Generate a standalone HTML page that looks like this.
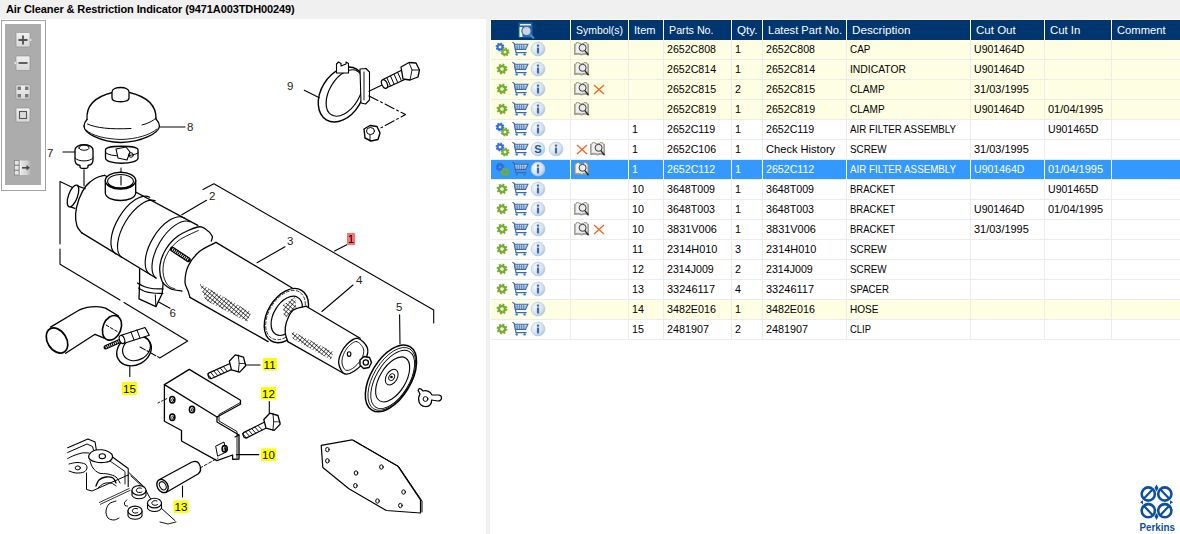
<!DOCTYPE html>
<html><head><meta charset="utf-8">
<style>
*{margin:0;padding:0;box-sizing:border-box}
html,body{width:1180px;height:534px;overflow:hidden;background:#f0f0f0;font-family:"Liberation Sans",sans-serif;position:relative}
.title{position:absolute;left:6px;top:2px;font-size:11px;font-weight:bold;color:#000;letter-spacing:-0.1px;white-space:nowrap;line-height:14px}
.lpanel{position:absolute;left:0;top:19px;width:486px;height:515px;background:#fff;overflow:hidden}
.rpanel{position:absolute;left:490px;top:19px;width:690px;height:515px;background:#fff;overflow:hidden}
.tb{position:absolute;left:1px;top:20px;width:45px;height:171px;border:1px solid #a3a3a3;background:#fff}
.tbin{position:absolute;left:5px;top:24px;width:36px;height:161px;background:#acacac}
.btn{position:absolute;width:16px;height:16px}
.hdr{position:absolute;left:491px;top:20px;width:689px;height:20px;background:#00366f}
.hsep{position:absolute;top:20px;width:1px;height:20px;background:#fff}
.ht{position:absolute;top:20px;height:20px;line-height:20px;font-size:11.5px;color:#fff;white-space:nowrap;transform-origin:0 50%}
.hicon{position:absolute}
.row{position:absolute;left:491px;width:689px;height:19px}
.vsep{position:absolute;width:1px;height:19px}
.hsepr{position:absolute;left:491px;width:689px;height:1px;background:#ececec}
.ic{position:absolute;overflow:visible}
.ct{position:absolute;height:19px;line-height:19px;font-size:11px;white-space:nowrap;transform-origin:0 50%}
.draw{position:absolute;left:0;top:0}
.lbl{font-family:"Liberation Sans",sans-serif;font-size:11px;fill:#000}
</style></head><body>
<svg width="0" height="0" style="position:absolute">
<defs>
<radialGradient id="ig" cx="0.35" cy="0.35" r="0.7"><stop offset="0" stop-color="#f4f7fb"/><stop offset="0.7" stop-color="#d6e2ef"/><stop offset="1" stop-color="#a9c3de"/></radialGradient><linearGradient id="bkg" x1="0" y1="0" x2="1" y2="0"><stop offset="0" stop-color="#9a9a88"/><stop offset="0.15" stop-color="#f4f4f4"/><stop offset="0.5" stop-color="#e8e8e8"/><stop offset="0.85" stop-color="#f0f0f0"/><stop offset="1" stop-color="#9a9a88"/></linearGradient>
</defs></svg>
<div class="title">Air Cleaner &amp; Restriction Indicator (9471A003TDH00249)</div>
<div class="lpanel"></div>
<div class="rpanel"></div>
<svg class="draw" width="486" height="534" viewBox="0 0 486 534" style="left:0;top:0;position:absolute">
<defs><pattern id="mesh" width="3.2" height="3.2" patternUnits="userSpaceOnUse" patternTransform="rotate(40)"><path d="M0 0 L0 3.2 M0 0 L3.2 0" stroke="#000" stroke-width="1.05"/></pattern></defs>
<g stroke="#000" stroke-linejoin="round" stroke-linecap="round">
<path d="M72.5 187.6 L60.0 181.5 L60.0 244.0" stroke-width="1.1" fill="none" />
<path d="M60.0 249.0 L60.0 264.3 L120.0 300.0" stroke-width="1.1" fill="none" />
<path d="M124.0 302.5 L187.7 341.0 L159.7 358.0" stroke-width="1.1" fill="none" />
<path d="M203.0 189.4 L213.9 183.8 L433.7 310.0 L433.7 323.0" stroke-width="1.1" fill="none" />
<g transform="translate(341.5 94.5) rotate(31)"><ellipse cx="0" cy="0" rx="20.5" ry="29.5" fill="#fff" stroke-width="1.4"/></g>
<g transform="translate(344.5 93) rotate(31)"><ellipse cx="0" cy="0" rx="15" ry="25.5" fill="#fff" stroke-width="1.2"/></g>
<path d="M336.5 64.0 L338.5 62.0 L341.0 63.5 L341.0 66.0 L346.0 64.0 L346.0 62.0 L348.5 63.5 L348.5 73.0 L336.5 73.0 Z" stroke-width="1.1" fill="#fff" />
<path d="M360.0 69.0 L366.0 68.5 L369.5 72.0 L369.5 100.0 L365.5 104.0 L361.0 103.0 Z" stroke-width="1.1" fill="#fff" />
<path d="M364.0 72.0 L364.0 100.0" stroke-width="0.9" fill="none" />
<path d="M304.3 90.3 L319.3 97.8" stroke-width="1.1" fill="none" />
<path d="M369.0 91.2 L383.0 84.5" stroke-width="1.1" fill="none" />
<path d="M383.0 79.5 L402.0 70.0 L406.0 79.0 L386.0 88.0 Z" stroke-width="1.2" fill="#fff" />
<path d="M387.0 78.0 L390.5 86.0" stroke-width="1.0" fill="none" />
<path d="M390.6 76.2 L394.1 84.2" stroke-width="1.0" fill="none" />
<path d="M394.2 74.4 L397.7 82.4" stroke-width="1.0" fill="none" />
<path d="M397.8 72.6 L401.3 80.6" stroke-width="1.0" fill="none" />
<path d="M401.4 70.8 L404.9 78.8" stroke-width="1.0" fill="none" />
<ellipse cx="384.5" cy="84" rx="2.6" ry="4.6" transform="rotate(-26 384.5 84)" fill="#fff" stroke-width="1.2"/>
<path d="M401.0 67.0 L409.0 62.5 L416.0 63.0 L419.5 70.0 L418.0 77.0 L410.0 80.0 L403.0 79.0 Z" stroke-width="1.3" fill="#fff" />
<path d="M409.0 62.5 L412.0 70.0 L419.5 70.0" stroke-width="0.9" fill="none" />
<path d="M412.0 70.0 L410.0 80.0" stroke-width="0.9" fill="none" />
<path d="M369.0 95.9 L405.5 114.6 L379.3 128.7" stroke-width="1.1" fill="none" stroke-dasharray="10 3 2 3"/>
<path d="M364.0 129.0 L370.0 125.5 L377.0 126.5 L380.0 133.0 L378.0 139.5 L371.0 141.0 L365.0 138.0 Z" stroke-width="1.4" fill="#fff" />
<ellipse cx="370.5" cy="131" rx="4" ry="3.5" stroke-width="1" fill="none"/>
<path d="M370.0 135.0 L370.0 141.0" stroke-width="0.9" fill="none" />
<path d="M84 126 C84 133 100 142 121 142.5 C142 142 159 133 159.5 126 C159 122 157 120 156 119" stroke-width="1.3" fill="#fff" />
<path d="M86 130 C92 136 106 139 121 139.5 C137 139 150 135 157 129" stroke-width="0.9" fill="none" />
<path d="M84 126 C84 123 85.5 121 87 119.5" stroke-width="1.3" fill="none" />
<path d="M87 119.5 C86 106 94 97 112.5 92.5 M129.5 92.5 C148 97 156.5 106 156 119" stroke-width="1.3" fill="none" />
<path d="M87.5 124 C96 128 110 129.5 131 128.5 M142 125 C148 123.5 153 121 156 118" stroke-width="1" fill="none" />
<path d="M112 92 C112 86 129 86 129 92 L129 98 C129 103 112 103 112 98 Z" stroke-width="1.3" fill="#fff" />
<path d="M105.5 150 C105.5 145 138 145 138 150 L138 158 C138 165 105.5 165 105.5 158 Z" stroke-width="1.3" fill="#fff" />
<path d="M106 153 C110 157 132 157 138 153" stroke-width="1" fill="none" />
<path d="M116.0 149.0 L126.0 147.0 L130.0 152.0 L127.0 160.0 L118.0 158.0 Z" stroke-width="1.1" fill="#fff" />
<circle cx="131" cy="155" r="2.3" stroke-width="1" fill="none"/>
<path d="M121.0 168.0 L121.0 190.0" stroke-width="1" fill="none" stroke-dasharray="4 2 1 2"/>
<path d="M75 150 C75 143 93 143 93 150 L93 160 C93 163 91 165 88 165.5 L88 167 C88 169 80 169 80 167 L80 165.5 C77 165 75 163 75 160 Z" stroke-width="1.3" fill="#fff" />
<path d="M79 148 C79 144 89 144 89 148 C89 151 79 151 79 148 Z" stroke-width="1" fill="none" />
<path d="M75 158 C78 162 90 162 93 158" stroke-width="1" fill="none" />
<path d="M84.0 170.0 L84.0 186.0" stroke-width="1.1" fill="none" />
<path d="M63.0 152.0 L75.0 152.0" stroke-width="1.1" fill="none" />
<path d="M160.0 127.0 L185.0 127.0" stroke-width="1.1" fill="none" />
<path d="M139.6 266.0 L139.6 283.0 L139.0 298.8 L155.9 306.6 L162.1 293.7 L163.0 285.0 L163.0 276.0 Z" stroke-width="1.3" fill="#fff" />
<path d="M137.4 283.0 C138.5 283.6 141.6 285.6 144.0 286.5 C146.4 287.4 148.8 288.1 152.0 288.5 C155.2 288.9 161.3 288.9 163.2 289.0" stroke-width="1.2" fill="none" />
<path d="M138.5 288.0 C139.6 288.6 142.6 290.7 145.0 291.5 C147.4 292.3 150.0 292.7 153.0 293.0 C156.0 293.3 161.3 293.4 163.0 293.5" stroke-width="1.1" fill="none" />
<path d="M155.3 294.8 L155.9 306.6" stroke-width="1.0" fill="none" />
<path d="M158.7 302.1 L170.0 308.3" stroke-width="1.1" fill="none" />
<path d="M104.4 175.3 C102.8 175.8 98.1 176.7 95.0 178.5 C91.9 180.3 88.7 182.6 86.0 186.0 C83.3 189.4 80.7 194.3 79.0 199.0 C77.3 203.7 75.9 209.5 75.6 214.0 C75.3 218.5 76.0 222.8 77.0 226.0 C78.0 229.2 81.0 231.8 81.8 232.9 L155 278 L162 281 L170 288.5 L181.8 291 L213 262 L212.1 238.9 L205.7 229.3 L197.8 225.4 Z" stroke-width="1.3" fill="#fff" stroke="none"/>
<path d="M104.4 175.3 C102.8 175.8 98.1 176.7 95.0 178.5 C91.9 180.3 88.7 182.6 86.0 186.0 C83.3 189.4 80.7 194.3 79.0 199.0 C77.3 203.7 75.9 209.5 75.6 214.0 C75.3 218.5 76.0 222.8 77.0 226.0 C78.0 229.2 81.0 231.8 81.8 232.9" stroke-width="1.3" fill="none" />
<path d="M104.4 175.3 L197.8 225.4" stroke-width="1.3" fill="none" />
<path d="M81.8 232.9 L156.0 278.0" stroke-width="1.3" fill="none" />
<g transform="rotate(31)" fill="none" stroke-width="1.15"><path d="M230 92 A16 33 0 0 0 230 158"/><path d="M236.5 92.2 A16 33 0 0 0 236.5 158"/><path d="M270.3 92 A16.5 33 0 0 0 270.3 158"/><path d="M277 92.2 A16.5 33 0 0 0 277 158"/></g>
<path d="M211.3 241.0 C211.4 240.2 213.0 237.9 212.1 236.0 C211.2 234.1 208.1 230.8 205.7 229.3 C203.3 227.8 202.4 225.9 197.8 227.0 C193.2 228.1 183.3 232.3 178.0 236.0 C172.7 239.7 169.0 244.2 166.0 249.0 C163.0 253.8 160.7 259.7 160.0 265.0 C159.3 270.3 160.3 277.1 162.0 281.0 C163.7 284.9 166.7 286.8 170.0 288.5 C173.3 290.2 179.8 290.6 181.8 291.0" stroke-width="1.3" fill="none" />
<path d="M198.3 230.5 C194.9 232.2 183.4 236.8 178.0 241.0 C172.6 245.2 168.5 250.8 166.0 256.0 C163.5 261.2 162.8 267.2 163.0 272.0 C163.2 276.8 165.4 281.9 167.4 284.7 C169.4 287.5 173.7 288.3 175.0 289.0" stroke-width="0.9" fill="none" />
<path d="M105.3 180.6 L105.3 193 C106 203 135 203 135.7 193 L135.7 180.6" stroke-width="1.3" fill="#fff" />
<ellipse cx="120.5" cy="180.6" rx="15.2" ry="8.4" fill="#fff" stroke-width="1.4"/>
<ellipse cx="120.5" cy="181.3" rx="12.9" ry="6.8" fill="none" stroke-width="1.1"/>
<path d="M108 185 C112 189.5 129 189.5 133 185" stroke-width="1.6" fill="none" />
<path d="M121.0 176.0 L121.0 185.0" stroke-width="1.1" fill="none" />
<g transform="translate(73 196) rotate(20)"><path d="M0 -11 L9 -11 M0 11 L6 11" stroke-width="1.2"/><ellipse cx="0" cy="0" rx="4.5" ry="11.5" fill="#fff" stroke-width="1.3"/></g>
<path d="M172.3 249.2 L188.2 259.6" stroke-width="5" fill="none" />
<path d="M172.3 249.2 L188.2 259.6" stroke-width="2.6" fill="none" stroke="#fff" stroke-dasharray="0.9 1.1" stroke-linecap="butt"/>
<path d="M216.0 242.4 C213.2 243.9 204.0 247.7 199.4 251.6 C194.8 255.5 190.6 260.9 188.2 266.0 C185.8 271.1 185.0 277.7 185.0 281.9 C185.0 286.1 187.4 288.8 188.2 291.4 C189.0 294.0 189.7 296.4 190.0 297.4 L268.1 341.6 C269.2 341.8 271.9 343.0 274.7 343.0 C277.5 343.0 281.6 343.3 285.2 341.6 C288.8 339.9 292.7 337.3 296.0 333.0 C299.3 328.7 303.0 321.3 305.0 316.0 C307.0 310.7 308.9 305.2 308.1 301.0 C307.3 296.8 302.5 293.1 300.0 291.0 C297.5 288.9 294.2 288.9 293.0 288.5 L216 242.4 Z" stroke-width="1.3" fill="#fff" stroke="none"/>
<path d="M216.0 242.4 C213.2 243.9 204.0 247.7 199.4 251.6 C194.8 255.5 190.6 260.9 188.2 266.0 C185.8 271.1 185.0 277.7 185.0 281.9 C185.0 286.1 187.4 288.8 188.2 291.4 C189.0 294.0 189.7 296.4 190.0 297.4" stroke-width="1.3" fill="none" />
<path d="M216.0 242.4 L294.3 289.2" stroke-width="1.3" fill="none" />
<path d="M190.0 297.4 L268.1 341.6" stroke-width="1.3" fill="none" />
<g transform="rotate(31)"><ellipse cx="408" cy="123" rx="18.8" ry="29.5" fill="#fff" stroke-width="1.4"/><ellipse cx="407" cy="123" rx="16.5" ry="27" fill="none" stroke-width="0.7" stroke-dasharray="3 2"/><ellipse cx="408.5" cy="123" rx="13" ry="21.5" fill="none" stroke-width="1.2"/></g>
<path d="M199.7 283.4 L251.2 312.5 L247.4 321.8 L205.3 300.3 Z" fill="url(#mesh)" stroke="none"/>
<path d="M283 305 L295 297 L297 311 L284 318 Z" fill="url(#mesh)" stroke="none"/>
<path d="M306.1 306.2 C303.9 306.9 296.3 307.6 293.0 310.2 C289.7 312.8 287.8 318.3 286.5 322.0 C285.2 325.7 285.0 329.2 285.2 332.5 C285.4 335.8 287.4 340.1 287.8 341.6 L343 373 C343.2 373.1 342.4 373.9 344.2 373.6 C346.0 373.3 350.6 373.4 354.0 371.2 C357.4 369.0 362.7 364.1 364.9 360.2 C367.1 356.3 368.2 351.6 367.4 348.0 C366.6 344.4 361.3 339.9 360.1 338.3 Z" stroke-width="1.3" fill="#fff" stroke="none"/>
<path d="M306.1 306.2 C303.9 306.9 296.3 307.6 293.0 310.2 C289.7 312.8 287.8 318.3 286.5 322.0 C285.2 325.7 285.0 329.2 285.2 332.5 C285.4 335.8 287.4 340.1 287.8 341.6" stroke-width="1.3" fill="none" />
<path d="M306.1 306.2 L360.1 338.3" stroke-width="1.3" fill="none" />
<path d="M287.8 341.6 L343.0 373.0" stroke-width="1.3" fill="none" />
<path d="M357.6 338.3 C361.1 338.9 366.2 344.4 367.4 348.0 C368.6 351.6 367.1 356.3 364.9 360.2 C362.7 364.1 357.4 369.0 354.0 371.2 C350.6 373.4 346.7 374.8 344.2 373.6 C341.7 372.4 339.4 367.1 338.8 363.8 C338.2 360.6 339.3 357.3 340.6 354.1 C341.9 350.9 343.9 347.0 346.7 344.4 C349.5 341.8 354.2 337.7 357.6 338.3 Z" stroke-width="1.3" fill="#fff" />
<path d="M356.5 341.5 C359.0 341.9 362.7 346.1 363.5 349.0 C364.3 351.9 363.3 355.8 361.5 359.0 C359.7 362.2 355.2 366.7 352.5 368.5 C349.8 370.3 347.2 370.9 345.5 370.0 C343.8 369.1 342.3 365.6 342.0 363.0 C341.7 360.4 342.4 357.2 343.5 354.5 C344.6 351.8 346.3 348.7 348.5 346.5 C350.7 344.3 354.0 341.1 356.5 341.5 Z" stroke-width="0.9" fill="none" />
<ellipse cx="349.1" cy="354.1" rx="1.8" ry="2.3" stroke-width="1.1" fill="none"/>
<path d="M291.5 330.9 L333.5 351.9 L330.9 359.7 L292.8 338.7 Z" fill="url(#mesh)" stroke="none"/>
<path d="M360.0 360.0 L364.0 356.5 L369.5 357.5 L371.5 362.5 L369.0 367.5 L363.5 368.5 L360.0 365.0 Z" stroke-width="1.4" fill="#fff" />
<circle cx="365.8" cy="362.5" r="2.6" fill="none" stroke-width="1.3"/>
<g transform="rotate(31)"><ellipse cx="530" cy="123" rx="20" ry="37" fill="#fff" stroke-width="1.5"/><ellipse cx="531" cy="123" rx="18.3" ry="35" stroke-width="0.8" fill="none"/><ellipse cx="532" cy="123" rx="16.5" ry="32.5" stroke-width="0.9" fill="none"/><ellipse cx="532" cy="123" rx="13" ry="25" stroke-width="1.1" fill="none"/><ellipse cx="530" cy="121.5" rx="5.5" ry="8.5" stroke-width="1" fill="none"/><ellipse cx="530" cy="121.5" rx="2.6" ry="3.6" stroke-width="0.9" fill="none"/></g>
<circle cx="391.5" cy="377" r="1.3" fill="#000" stroke="none"/>
<path d="M420 394 C417 399 419 406 425 406.5 C430 407 432 403 431.5 400 L438 401 C442 401 443 396 439 395 L432 395 C430 391 426 390 423 391 L421 389 C419 388 417 390 419 392 Z" stroke-width="1.2" fill="#fff" />
<circle cx="425.5" cy="399" r="2.4" fill="none" stroke-width="1"/>
<path d="M181.8 214.7 L206.5 200.3" stroke-width="1.1" fill="none" />
<path d="M257.0 262.7 L285.0 246.7" stroke-width="1.1" fill="none" />
<path d="M334.6 251.0 L349.7 243.3" stroke-width="1.1" fill="none" />
<path d="M321.9 311.5 L353.0 285.0" stroke-width="1.1" fill="none" />
<path d="M399.6 314.7 L400.0 344.0" stroke-width="1.1" fill="none" />
<path d="M50.5 327.1 L78 310.7 C84 307 98 305 105.5 308.1 L118.6 316 L104.2 338.2 L95 334.3 L65.6 353.3 Z" stroke-width="1.3" fill="#fff" stroke="none"/>
<path d="M50.5 327.1 L78 310.7 C84 307 98 305 105.5 308.1 L118.6 316" stroke-width="1.3" fill="none" />
<path d="M65.6 353.3 L95.0 334.3 L104.2 338.2" stroke-width="1.3" fill="none" />
<g transform="translate(57 340.5) rotate(-32)"><ellipse cx="0" cy="0" rx="9.5" ry="13.5" fill="#fff" stroke-width="1.7"/></g>
<g transform="translate(112 327.8) rotate(22)"><ellipse cx="0" cy="0" rx="9" ry="12.8" fill="#fff" stroke-width="1.6"/></g>
<g transform="translate(134 350.5) rotate(-28)"><ellipse cx="0" cy="0" rx="18" ry="14.5" fill="none" stroke-width="1.4"/></g>
<g transform="translate(136.5 348.5) rotate(-28)"><ellipse cx="0" cy="0" rx="14.5" ry="11.5" fill="none" stroke-width="1.2"/></g>
<path d="M106.2 325.1 L117.0 331.5" stroke-width="1.0" fill="none" stroke-dasharray="3 2"/>
<path d="M140.0 347.0 L160.0 358.0" stroke-width="1.1" fill="none" stroke-dasharray="6 2 2 2"/>
<path d="M105.7 347.3 L122.1 340.0" stroke-width="4.4" fill="none" />
<path d="M105.7 347.3 L122.1 340.0" stroke-width="2.2" fill="none" stroke="#fff" stroke-dasharray="0.9 1.1" stroke-linecap="butt"/>
<path d="M120.6 335.5 L145.0 327.5 L149.3 335.3 L123.5 343.5 Z" stroke-width="1.2" fill="#fff" />
<ellipse cx="122" cy="339.5" rx="2.5" ry="4.2" transform="rotate(-20 122 339.5)" fill="#fff" stroke-width="1.1"/>
<path d="M131.0 332.0 L134.0 340.0" stroke-width="1.0" fill="none" />
<path d="M137.0 330.0 L140.0 338.0" stroke-width="1.0" fill="none" />
<path d="M129.8 366.8 L129.8 376.5" stroke-width="1.1" fill="none" />
<path d="M164.4 384.6 L189.3 369.4 L240.5 400.3 L240.5 404.2 L217.0 417.0 L217.0 422.0 L239.0 435.0 L239.0 459.0 L232.6 459.3 L232.6 455.0 L216.9 460.6 L181.5 441.0 L181.5 430.5 L164.4 421.3 Z" stroke-width="1.3" fill="#fff" />
<path d="M164.4 384.6 L217.0 417.0" stroke-width="1.3" fill="none" />
<path d="M235.0 437.0 L239.0 435.0" stroke-width="1.1" fill="none" />
<path d="M240.5 402.5 L219.0 414.5 L219.0 421.0 L237.0 431.5 L237.0 458.0" stroke-width="0.9" fill="none" />
<ellipse cx="172.3" cy="399.8" rx="2.6" ry="3.3" stroke-width="1.5" fill="none"/><ellipse cx="172.70000000000002" cy="400.1" rx="1" ry="1.5" stroke-width="0.8" fill="none"/>
<ellipse cx="172.3" cy="417.3" rx="2.6" ry="3.3" stroke-width="1.5" fill="none"/><ellipse cx="172.70000000000002" cy="417.6" rx="1" ry="1.5" stroke-width="0.8" fill="none"/>
<ellipse cx="192" cy="409.5" rx="2.6" ry="3.3" stroke-width="1.5" fill="none"/><ellipse cx="192.4" cy="409.8" rx="1" ry="1.5" stroke-width="0.8" fill="none"/>
<ellipse cx="224.7" cy="448.8" rx="2.6" ry="3.3" stroke-width="1.5" fill="none"/><ellipse cx="225.1" cy="449.1" rx="1" ry="1.5" stroke-width="0.8" fill="none"/>
<path d="M158.0 403.0 L168.0 398.0" stroke-width="0.9" fill="none" stroke-dasharray="2 2"/>
<path d="M216.0 446.0 L224.0 442.0 L226.0 452.0 L218.0 456.0 Z" stroke-width="1.0" fill="none" />
<path d="M231.6 362.8 L208.6 373.1 L207.9 375.1 L209.1 377.9 L211.1 378.7 L234.1 368.4 Z" stroke-width="1.2" fill="#fff" />
<path d="M223.4 366.6 L227.3 371.3" stroke-width="0.9" fill="none" />
<path d="M220.2 368.0 L224.1 372.8" stroke-width="0.9" fill="none" />
<path d="M217.0 369.5 L220.9 374.2" stroke-width="0.9" fill="none" />
<path d="M213.8 370.9 L217.7 375.6" stroke-width="0.9" fill="none" />
<path d="M210.6 372.3 L214.5 377.0" stroke-width="0.9" fill="none" />
<path d="M207.4 373.7 L211.3 378.5" stroke-width="0.9" fill="none" />
<path d="M245.7 365.8 L239.7 372.1 L231.5 369.8 L229.3 361.2 L235.3 354.9 L243.5 357.2 Z" stroke-width="1.3" fill="#fff" />
<path d="M238.3 355.0 L239.2 363.5 L238.3 372.0" stroke-width="0.9" fill="none" />
<path d="M239.2 363.5 L245.6 363.5" stroke-width="0.8" fill="none" />
<path d="M245.5 365.0 L260.0 365.0" stroke-width="1.1" fill="none" />
<path d="M266.1 421.3 L243.5 432.6 L242.8 434.6 L244.2 437.4 L246.2 438.1 L268.8 426.8 Z" stroke-width="1.2" fill="#fff" />
<path d="M258.0 425.5 L262.1 430.0" stroke-width="0.9" fill="none" />
<path d="M254.9 427.0 L258.9 431.6" stroke-width="0.9" fill="none" />
<path d="M251.7 428.6 L255.8 433.2" stroke-width="0.9" fill="none" />
<path d="M248.6 430.2 L252.7 434.7" stroke-width="0.9" fill="none" />
<path d="M245.5 431.7 L249.5 436.3" stroke-width="0.9" fill="none" />
<path d="M242.3 433.3 L246.4 437.9" stroke-width="0.9" fill="none" />
<path d="M280.2 424.1 L274.2 430.4 L266.0 428.1 L263.8 419.5 L269.8 413.2 L278.0 415.5 Z" stroke-width="1.3" fill="#fff" />
<path d="M272.9 413.3 L273.7 421.8 L272.9 430.3" stroke-width="0.9" fill="none" />
<path d="M273.7 421.8 L280.1 421.8" stroke-width="0.8" fill="none" />
<path d="M269.3 401.6 L269.3 413.0" stroke-width="1.1" fill="none" />
<path d="M236.5 454.6 L258.8 454.6" stroke-width="1.1" fill="none" />
<path d="M159.5 479.5 L192 462 C200 459 203 470 198 474 L166 492.5" stroke-width="1.3" fill="#fff" />
<g transform="translate(162.5 486) rotate(-30)"><ellipse cx="0" cy="0" rx="5.2" ry="7" fill="#fff" stroke-width="1.4"/><ellipse cx="0.3" cy="0" rx="3" ry="4.4" stroke-width="1" fill="none"/></g>
<path d="M182.5 486.0 L182.5 497.0" stroke-width="1.1" fill="none" />
<path d="M200.0 468.0 L218.0 458.0" stroke-width="0.9" fill="none" stroke-dasharray="3 2"/>
<path d="M67.7 447.7 L87.9 439.1 L95.1 442.0 L96.5 451.0" stroke-width="1.1" fill="none" />
<path d="M67.7 452.5 L87.0 444.0 L92.5 446.5 L93.5 450.0" stroke-width="1.0" fill="none" />
<path d="M67.7 458.5 C68.8 458.0 71.6 456.4 74.0 455.5 C76.4 454.6 79.5 453.4 82.0 453.0 C84.5 452.6 87.8 453.0 89.0 453.0" stroke-width="1.0" fill="none" />
<path d="M89.0 455.0 C89.7 453.5 91.8 451.4 94.0 450.5 C96.2 449.6 99.5 449.6 102.0 449.8 C104.5 450.1 107.2 451.0 109.0 452.0 C110.8 453.0 112.3 454.5 112.5 456.0 C112.7 457.5 111.6 459.9 110.0 461.0 C108.4 462.1 105.3 462.3 103.0 462.5 C100.7 462.7 98.2 462.5 96.0 462.0 C93.8 461.5 91.2 460.7 90.0 459.5 C88.8 458.3 88.3 456.5 89.0 455.0 Z" stroke-width="1.1" fill="#fff" />
<ellipse cx="102.3" cy="456.2" rx="3.2" ry="2.4" stroke-width="1.1" fill="none"/>
<path d="M112.5 457.0 L128.2 468.5 L128.2 486.5" stroke-width="1.1" fill="none" />
<path d="M110.0 461.0 L125.0 471.5 L125.0 484.0" stroke-width="0.9" fill="none" />
<path d="M90.0 461.0 C90.5 462.2 91.5 466.0 93.0 468.0 C94.5 470.0 96.5 472.0 99.0 473.0 C101.5 474.0 105.2 473.3 108.0 474.0 C110.8 474.7 114.0 475.5 116.0 477.0 C118.0 478.5 119.3 482.0 120.0 483.0" stroke-width="1.0" fill="none" />
<path d="M96.0 486.0 C96.5 485.0 97.3 481.5 99.0 480.0 C100.7 478.5 103.7 477.3 106.0 477.0 C108.3 476.7 111.3 477.0 113.0 478.0 C114.7 479.0 115.5 482.2 116.0 483.0" stroke-width="1.4" fill="none" />
<path d="M98.0 488.0 C99.0 487.2 101.8 484.3 104.0 483.5 C106.2 482.7 109.0 482.6 111.0 483.0 C113.0 483.4 115.2 485.5 116.0 486.0" stroke-width="1.0" fill="none" />
<path d="M69.0 464.0 C70.3 463.8 74.3 462.5 77.0 462.5 C79.7 462.5 83.3 463.1 85.0 464.0 C86.7 464.9 87.2 466.7 87.0 468.0 C86.8 469.3 85.8 471.2 84.0 472.0 C82.2 472.8 78.5 473.2 76.0 473.0 C73.5 472.8 70.2 471.3 69.0 471.0" stroke-width="1.0" fill="none" />
<ellipse cx="77.8" cy="467.9" rx="2.6" ry="2" stroke-width="1" fill="none"/>
<path d="M86.5 473.0 L86.5 489.5 L92.0 491.0 L128.2 475.0" stroke-width="1.0" fill="none" />
<path d="M99.4 502.5 L129.2 488.5" stroke-width="0.8" fill="none" />
<path d="M100.4 504.3 L130.2 490.3" stroke-width="0.8" fill="none" />
<path d="M129.2 472.9 L143.8 486.5 L150.0 498.0 L175.0 520.6" stroke-width="1.0" fill="none" />
<path d="M131.0 476.0 L146.0 490.0" stroke-width="0.9" fill="none" />
<path d="M132 490.4 L132 495.4 C134 499.9 144 499.9 146 495.4 L146 490.4" stroke-width="1.1" fill="#fff"/>
<ellipse cx="139" cy="490.4" rx="7" ry="4.8" fill="#fff" stroke-width="1.1"/><path d="M141.5 488.2 C138 486.9 135 489.4 137 491.9 C139 493.2 141.5 492.4 142 491.9" fill="none" stroke-width="1"/>
<path d="M147.5 503.1 L147.5 508.1 C149.5 512.6 159.5 512.6 161.5 508.1 L161.5 503.1" stroke-width="1.1" fill="#fff"/>
<ellipse cx="154.5" cy="503.1" rx="7" ry="4.8" fill="#fff" stroke-width="1.1"/><path d="M157.0 500.90000000000003 C153.5 499.6 150.5 502.1 152.5 504.6 C154.5 505.90000000000003 157.0 505.1 157.5 504.6" fill="none" stroke-width="1"/>
<path d="M128 510.9 L128 515.9 C130 520.4 140 520.4 142 515.9 L142 510.9" stroke-width="1.1" fill="#fff"/>
<ellipse cx="135" cy="510.9" rx="7" ry="4.8" fill="#fff" stroke-width="1.1"/><path d="M137.5 508.7 C134 507.4 131 509.9 133 512.4 C135 513.6999999999999 137.5 512.9 138 512.4" fill="none" stroke-width="1"/>
<path d="M116.0 501.0 C114.8 501.5 110.7 502.3 109.0 504.0 C107.3 505.7 106.2 508.7 106.0 511.0 C105.8 513.3 106.7 516.5 108.0 518.0 C109.3 519.5 112.2 520.0 114.0 520.0 C115.8 520.0 118.2 518.3 119.0 518.0" stroke-width="1.0" fill="none" />
<path d="M127.0 500.0 C126.6 500.4 124.8 501.6 124.5 502.5 C124.2 503.4 124.5 504.9 125.0 505.5 C125.5 506.1 127.1 505.9 127.5 506.0" stroke-width="1.0" fill="none" />
<path d="M160.0 522.0 L168.0 524.0 L176.0 522.0" stroke-width="0.9" fill="none" />
<path d="M321.2 445.3 L352.0 439.8 L397.7 465.9 L420.5 500.0 L420.5 513.0 L386.3 510.5 L348.9 488.7 L322.8 467.5 Z" stroke-width="1.2" fill="#fff" />
<path d="M354.0 440.5 L399.0 467.0 L422.0 501.0 L422.0 512.0" stroke-width="1" fill="none" />
<ellipse cx="327.4" cy="449.6" rx="1.8" ry="2.2" stroke-width="1" fill="none"/>
<ellipse cx="327.4" cy="460.8" rx="1.8" ry="2.2" stroke-width="1" fill="none"/>
<ellipse cx="356" cy="473" rx="1.8" ry="2.2" stroke-width="1" fill="none"/>
<ellipse cx="381.4" cy="467" rx="1.8" ry="2.2" stroke-width="1" fill="none"/>
<ellipse cx="355.4" cy="485.7" rx="1.8" ry="2.2" stroke-width="1" fill="none"/>
<ellipse cx="403.6" cy="492" rx="1.8" ry="2.2" stroke-width="1" fill="none"/>
<ellipse cx="377.5" cy="501" rx="1.8" ry="2.2" stroke-width="1" fill="none"/>
<ellipse cx="400.4" cy="505.5" rx="1.8" ry="2.2" stroke-width="1" fill="none"/>
</g>
<g font-family="Liberation Sans" font-size="11.5" fill="#222">
<text x="47" y="157">7</text><text x="187" y="131">8</text><text x="287" y="90">9</text>
<text x="209" y="200">2</text><text x="287" y="245">3</text><text x="356" y="284">4</text>
<text x="396" y="311">5</text><text x="169.5" y="316.5">6</text>
</g>
<g font-family="Liberation Sans" font-size="11.5" fill="#000">
<rect x="347" y="233" width="8" height="12" fill="#ff7070"/><text x="347.8" y="243.3">1</text>
<rect x="122" y="382" width="15" height="13" fill="#ffff00"/><text x="123" y="392.8">15</text>
<rect x="263" y="358" width="14" height="12.5" fill="#ffff00"/><text x="263.6" y="369">11</text>
<rect x="261" y="387" width="15" height="12.5" fill="#ffff00"/><text x="262" y="398">12</text>
<rect x="261" y="448.5" width="15" height="12.5" fill="#ffff00"/><text x="262" y="459">10</text>
<rect x="173.5" y="500.5" width="15" height="12.5" fill="#ffff00"/><text x="174.5" y="511">13</text>
</g>
</svg>
<div class="tb"></div><div class="tbin"></div>
<svg style="position:absolute;left:0;top:0" width="46" height="192" viewBox="0 0 46 192">
<defs><linearGradient id="bg1" x1="0" y1="0" x2="0" y2="1"><stop offset="0" stop-color="#f2f2f2"/><stop offset="0.5" stop-color="#e2e2e2"/><stop offset="1" stop-color="#d8d8d8"/></linearGradient>
<linearGradient id="bg2" x1="0" y1="0" x2="1" y2="0"><stop offset="0" stop-color="#e8e8e8"/><stop offset="0.6" stop-color="#d4d4d4"/><stop offset="1" stop-color="#acacac"/></linearGradient></defs>
<rect x="16" y="32.5" width="14" height="14.5" rx="1" fill="url(#bg1)" stroke="#8a8a8a" stroke-width="0.6"/>
<path d="M30 38.5 L32 40 L30 41.5 Z" fill="#e8e8e8"/>
<path d="M18.5 40 H27.5 M23 35.5 V44.5" stroke="#505050" stroke-width="1.8"/>
<rect x="16" y="56" width="14" height="14.5" rx="1" fill="url(#bg1)" stroke="#8a8a8a" stroke-width="0.6"/>
<path d="M16 61.5 L13.8 63 L16 64.5 Z" fill="#e8e8e8"/>
<path d="M18.5 63 H27.5" stroke="#505050" stroke-width="1.8"/>
<rect x="16" y="85" width="14" height="14" rx="1" fill="url(#bg1)" stroke="#8a8a8a" stroke-width="0.6"/>
<rect x="17.5" y="86.5" width="3.5" height="3.5" fill="#7a7a7a"/><rect x="25" y="86.5" width="3.5" height="3.5" fill="#7a7a7a"/>
<rect x="17.5" y="94" width="3.5" height="3.5" fill="#7a7a7a"/><rect x="25" y="94" width="3.5" height="3.5" fill="#7a7a7a"/>
<rect x="16" y="108" width="14" height="14" rx="1" fill="url(#bg1)" stroke="#8a8a8a" stroke-width="0.6"/>
<rect x="19.5" y="111.5" width="7" height="7" fill="#dcdcdc" stroke="#555" stroke-width="1.1"/>
<rect x="14.5" y="160.5" width="4.5" height="4.5" fill="#e6e6e6" stroke="#777" stroke-width="0.6"/>
<rect x="14.5" y="165.5" width="4.5" height="4.5" fill="#e6e6e6" stroke="#777" stroke-width="0.6"/>
<rect x="14.5" y="170.5" width="4.5" height="4.5" fill="#e6e6e6" stroke="#777" stroke-width="0.6"/>
<rect x="20" y="160.5" width="11" height="14.5" fill="url(#bg2)"/>
<path d="M20.3 160.5 V175" stroke="#fafafa" stroke-width="0.8"/>
<path d="M22 167.8 H27.5" stroke="#4a4a4a" stroke-width="1.6"/><path d="M26.5 165 L30 167.8 L26.5 170.5 Z" fill="#4a4a4a"/>
</svg><div class="hdr"></div>
<div class="hsep" style="left:570px"></div>
<div class="ht" style="left:576px;transform:scaleX(0.908)">Symbol(s)</div>
<div class="hsep" style="left:628px"></div>
<div class="ht" style="left:634px;transform:scaleX(0.960)">Item</div>
<div class="hsep" style="left:663px"></div>
<div class="ht" style="left:669px;transform:scaleX(0.929)">Parts No.</div>
<div class="hsep" style="left:731px"></div>
<div class="ht" style="left:737px;transform:scaleX(1.011)">Qty.</div>
<div class="hsep" style="left:762px"></div>
<div class="ht" style="left:768px;transform:scaleX(0.965)">Latest Part No.</div>
<div class="hsep" style="left:846px"></div>
<div class="ht" style="left:852px;transform:scaleX(1.015)">Description</div>
<div class="hsep" style="left:970px"></div>
<div class="ht" style="left:976px;transform:scaleX(1.002)">Cut Out</div>
<div class="hsep" style="left:1044px"></div>
<div class="ht" style="left:1050px;transform:scaleX(0.988)">Cut In</div>
<div class="hsep" style="left:1111px"></div>
<div class="ht" style="left:1117px;transform:scaleX(0.977)">Comment</div>
<svg class="hicon" style="left:518px;top:22px" width="17" height="17" viewBox="0 0 17 17"><rect x="0.5" y="0.5" width="14" height="15" fill="#1a66b8"/><rect x="2" y="2" width="11" height="1.5" fill="#e8eef5"/><rect x="1.5" y="5" width="3" height="10" fill="#f4f4f4"/><circle cx="8.5" cy="9" r="4.6" fill="#d0d2d6" stroke="#2a6fb8" stroke-width="1.2"/><path d="M11.5 12 L16 16.5" stroke="#4a86c8" stroke-width="2.2"/></svg>
<div class="row" style="top:40px;background:#fefee2"></div>
<div class="vsep" style="left:570px;top:40px;background:#ececec"></div>
<div class="vsep" style="left:628px;top:40px;background:#ececec"></div>
<div class="vsep" style="left:663px;top:40px;background:#ececec"></div>
<div class="vsep" style="left:731px;top:40px;background:#ececec"></div>
<div class="vsep" style="left:762px;top:40px;background:#ececec"></div>
<div class="vsep" style="left:846px;top:40px;background:#ececec"></div>
<div class="vsep" style="left:970px;top:40px;background:#ececec"></div>
<div class="vsep" style="left:1044px;top:40px;background:#ececec"></div>
<div class="vsep" style="left:1111px;top:40px;background:#ececec"></div>
<svg class="ic" style="left:494px;top:41px" width="16" height="17"><g transform="translate(6 6)"><circle cx="0" cy="0" r="2.5" fill="none" stroke="#2d6be0" stroke-width="2.1"/><circle cx="0" cy="0" r="3.7" fill="none" stroke="#2d6be0" stroke-width="1.5" stroke-dasharray="1.45 1.45"/></g><g transform="translate(11 11)"><circle cx="0" cy="0" r="2.5" fill="none" stroke="#74ae2c" stroke-width="2.1"/><circle cx="0" cy="0" r="3.7" fill="none" stroke="#74ae2c" stroke-width="1.5" stroke-dasharray="1.45 1.45"/></g></svg>
<svg class="ic" style="left:511px;top:41px" width="18" height="15"><path d="M1.4 1.3 L3.4 2.6 L4.4 8.4 L5 11.6 L15.6 11.6" fill="none" stroke="#3d6aa6" stroke-width="1.2"/><path d="M3.6 3.3 L16.9 3.3 L14.6 8.4 L4.4 8.4 Z" fill="#c9d9ec" stroke="#3d6aa6" stroke-width="1.1"/><path d="M6.2 3.8v4.2M8.4 3.8v4.2M10.6 3.8v4.2M12.8 3.8v4.2" stroke="#4d7bb3" stroke-width="0.9"/><path d="M4 5.9 H15.8" stroke="#6a92c2" stroke-width="0.7"/><circle cx="5.7" cy="13.4" r="1.2" fill="#2f7ad6"/><circle cx="13.6" cy="13.4" r="1.2" fill="#2f7ad6"/></svg>
<svg class="ic" style="left:530px;top:41px" width="16" height="16"><circle cx="8" cy="8" r="6.9" fill="url(#ig)" stroke="#b6cce3" stroke-width="0.8"/><rect x="6.9" y="3.6" width="2.2" height="2" fill="#3b6aa6"/><rect x="6.9" y="6.6" width="2.2" height="5.8" fill="#3b6aa6"/></svg>
<svg class="ic" style="left:574px;top:42px" width="17" height="14"><path d="M0.6 2.2 L2.5 1.6 L2.5 0.6 L5 0.6 L5 1.3 L7.5 1.8 L10 1.3 L10 0.6 L12.5 0.6 L12.5 1.6 L14.4 2.2 L14.4 12.6 L10 12.2 L7.5 13 L5 12.2 L0.6 12.6 Z" fill="url(#bkg)" stroke="#8c8c74" stroke-width="0.8"/><path d="M1.5 11.5 Q4.5 10.8 7.5 12.2 Q10.5 10.8 13.5 11.5" fill="none" stroke="#777" stroke-width="0.7"/><circle cx="8.6" cy="5.8" r="3.5" fill="none" stroke="#3a3a3a" stroke-width="1"/><path d="M10.9 8.6 L14.6 13.2" stroke="#262626" stroke-width="1.4"/></svg>
<div class="ct" style="left:667px;top:40px;color:#000000;transform:scaleX(0.965)">2652C808</div>
<div class="ct" style="left:735px;top:40px;color:#000000;transform:scaleX(0.975)">1</div>
<div class="ct" style="left:766px;top:40px;color:#000000;transform:scaleX(0.965)">2652C808</div>
<div class="ct" style="left:850px;top:40px;color:#000000;transform:scaleX(0.900)">CAP</div>
<div class="ct" style="left:974px;top:40px;color:#000000;transform:scaleX(0.960)">U901464D</div>
<div class="hsepr" style="top:59px"></div>
<div class="row" style="top:60px;background:#fefee2"></div>
<div class="vsep" style="left:570px;top:60px;background:#ececec"></div>
<div class="vsep" style="left:628px;top:60px;background:#ececec"></div>
<div class="vsep" style="left:663px;top:60px;background:#ececec"></div>
<div class="vsep" style="left:731px;top:60px;background:#ececec"></div>
<div class="vsep" style="left:762px;top:60px;background:#ececec"></div>
<div class="vsep" style="left:846px;top:60px;background:#ececec"></div>
<div class="vsep" style="left:970px;top:60px;background:#ececec"></div>
<div class="vsep" style="left:1044px;top:60px;background:#ececec"></div>
<div class="vsep" style="left:1111px;top:60px;background:#ececec"></div>
<svg class="ic" style="left:494px;top:61px" width="16" height="17"><g transform="translate(8 8) scale(1.22)"><circle cx="0" cy="0" r="2.5" fill="none" stroke="#74ae2c" stroke-width="2.1"/><circle cx="0" cy="0" r="3.7" fill="none" stroke="#74ae2c" stroke-width="1.5" stroke-dasharray="1.45 1.45"/></g></svg>
<svg class="ic" style="left:511px;top:61px" width="18" height="15"><path d="M1.4 1.3 L3.4 2.6 L4.4 8.4 L5 11.6 L15.6 11.6" fill="none" stroke="#3d6aa6" stroke-width="1.2"/><path d="M3.6 3.3 L16.9 3.3 L14.6 8.4 L4.4 8.4 Z" fill="#c9d9ec" stroke="#3d6aa6" stroke-width="1.1"/><path d="M6.2 3.8v4.2M8.4 3.8v4.2M10.6 3.8v4.2M12.8 3.8v4.2" stroke="#4d7bb3" stroke-width="0.9"/><path d="M4 5.9 H15.8" stroke="#6a92c2" stroke-width="0.7"/><circle cx="5.7" cy="13.4" r="1.2" fill="#2f7ad6"/><circle cx="13.6" cy="13.4" r="1.2" fill="#2f7ad6"/></svg>
<svg class="ic" style="left:530px;top:61px" width="16" height="16"><circle cx="8" cy="8" r="6.9" fill="url(#ig)" stroke="#b6cce3" stroke-width="0.8"/><rect x="6.9" y="3.6" width="2.2" height="2" fill="#3b6aa6"/><rect x="6.9" y="6.6" width="2.2" height="5.8" fill="#3b6aa6"/></svg>
<svg class="ic" style="left:574px;top:62px" width="17" height="14"><path d="M0.6 2.2 L2.5 1.6 L2.5 0.6 L5 0.6 L5 1.3 L7.5 1.8 L10 1.3 L10 0.6 L12.5 0.6 L12.5 1.6 L14.4 2.2 L14.4 12.6 L10 12.2 L7.5 13 L5 12.2 L0.6 12.6 Z" fill="url(#bkg)" stroke="#8c8c74" stroke-width="0.8"/><path d="M1.5 11.5 Q4.5 10.8 7.5 12.2 Q10.5 10.8 13.5 11.5" fill="none" stroke="#777" stroke-width="0.7"/><circle cx="8.6" cy="5.8" r="3.5" fill="none" stroke="#3a3a3a" stroke-width="1"/><path d="M10.9 8.6 L14.6 13.2" stroke="#262626" stroke-width="1.4"/></svg>
<div class="ct" style="left:667px;top:60px;color:#000000;transform:scaleX(0.966)">2652C814</div>
<div class="ct" style="left:735px;top:60px;color:#000000;transform:scaleX(0.975)">1</div>
<div class="ct" style="left:766px;top:60px;color:#000000;transform:scaleX(0.966)">2652C814</div>
<div class="ct" style="left:850px;top:60px;color:#000000;transform:scaleX(0.940)">INDICATOR</div>
<div class="ct" style="left:974px;top:60px;color:#000000;transform:scaleX(0.960)">U901464D</div>
<div class="hsepr" style="top:79px"></div>
<div class="row" style="top:80px;background:#fefee2"></div>
<div class="vsep" style="left:570px;top:80px;background:#ececec"></div>
<div class="vsep" style="left:628px;top:80px;background:#ececec"></div>
<div class="vsep" style="left:663px;top:80px;background:#ececec"></div>
<div class="vsep" style="left:731px;top:80px;background:#ececec"></div>
<div class="vsep" style="left:762px;top:80px;background:#ececec"></div>
<div class="vsep" style="left:846px;top:80px;background:#ececec"></div>
<div class="vsep" style="left:970px;top:80px;background:#ececec"></div>
<div class="vsep" style="left:1044px;top:80px;background:#ececec"></div>
<div class="vsep" style="left:1111px;top:80px;background:#ececec"></div>
<svg class="ic" style="left:494px;top:81px" width="16" height="17"><g transform="translate(8 8) scale(1.22)"><circle cx="0" cy="0" r="2.5" fill="none" stroke="#74ae2c" stroke-width="2.1"/><circle cx="0" cy="0" r="3.7" fill="none" stroke="#74ae2c" stroke-width="1.5" stroke-dasharray="1.45 1.45"/></g></svg>
<svg class="ic" style="left:511px;top:81px" width="18" height="15"><path d="M1.4 1.3 L3.4 2.6 L4.4 8.4 L5 11.6 L15.6 11.6" fill="none" stroke="#3d6aa6" stroke-width="1.2"/><path d="M3.6 3.3 L16.9 3.3 L14.6 8.4 L4.4 8.4 Z" fill="#c9d9ec" stroke="#3d6aa6" stroke-width="1.1"/><path d="M6.2 3.8v4.2M8.4 3.8v4.2M10.6 3.8v4.2M12.8 3.8v4.2" stroke="#4d7bb3" stroke-width="0.9"/><path d="M4 5.9 H15.8" stroke="#6a92c2" stroke-width="0.7"/><circle cx="5.7" cy="13.4" r="1.2" fill="#2f7ad6"/><circle cx="13.6" cy="13.4" r="1.2" fill="#2f7ad6"/></svg>
<svg class="ic" style="left:530px;top:81px" width="16" height="16"><circle cx="8" cy="8" r="6.9" fill="url(#ig)" stroke="#b6cce3" stroke-width="0.8"/><rect x="6.9" y="3.6" width="2.2" height="2" fill="#3b6aa6"/><rect x="6.9" y="6.6" width="2.2" height="5.8" fill="#3b6aa6"/></svg>
<svg class="ic" style="left:574px;top:82px" width="17" height="14"><path d="M0.6 2.2 L2.5 1.6 L2.5 0.6 L5 0.6 L5 1.3 L7.5 1.8 L10 1.3 L10 0.6 L12.5 0.6 L12.5 1.6 L14.4 2.2 L14.4 12.6 L10 12.2 L7.5 13 L5 12.2 L0.6 12.6 Z" fill="url(#bkg)" stroke="#8c8c74" stroke-width="0.8"/><path d="M1.5 11.5 Q4.5 10.8 7.5 12.2 Q10.5 10.8 13.5 11.5" fill="none" stroke="#777" stroke-width="0.7"/><circle cx="8.6" cy="5.8" r="3.5" fill="none" stroke="#3a3a3a" stroke-width="1"/><path d="M10.9 8.6 L14.6 13.2" stroke="#262626" stroke-width="1.4"/></svg>
<svg class="ic" style="left:593px;top:84px" width="12" height="11"><path d="M1 1 L11 10 M11 1 L1 10" stroke="#f26522" stroke-width="1.3"/></svg>
<div class="ct" style="left:667px;top:80px;color:#000000;transform:scaleX(0.966)">2652C815</div>
<div class="ct" style="left:735px;top:80px;color:#000000;transform:scaleX(0.975)">2</div>
<div class="ct" style="left:766px;top:80px;color:#000000;transform:scaleX(0.966)">2652C815</div>
<div class="ct" style="left:850px;top:80px;color:#000000;transform:scaleX(0.913)">CLAMP</div>
<div class="ct" style="left:974px;top:80px;color:#000000;transform:scaleX(0.995)">31/03/1995</div>
<div class="hsepr" style="top:99px"></div>
<div class="row" style="top:100px;background:#fefee2"></div>
<div class="vsep" style="left:570px;top:100px;background:#ececec"></div>
<div class="vsep" style="left:628px;top:100px;background:#ececec"></div>
<div class="vsep" style="left:663px;top:100px;background:#ececec"></div>
<div class="vsep" style="left:731px;top:100px;background:#ececec"></div>
<div class="vsep" style="left:762px;top:100px;background:#ececec"></div>
<div class="vsep" style="left:846px;top:100px;background:#ececec"></div>
<div class="vsep" style="left:970px;top:100px;background:#ececec"></div>
<div class="vsep" style="left:1044px;top:100px;background:#ececec"></div>
<div class="vsep" style="left:1111px;top:100px;background:#ececec"></div>
<svg class="ic" style="left:494px;top:101px" width="16" height="17"><g transform="translate(8 8) scale(1.22)"><circle cx="0" cy="0" r="2.5" fill="none" stroke="#74ae2c" stroke-width="2.1"/><circle cx="0" cy="0" r="3.7" fill="none" stroke="#74ae2c" stroke-width="1.5" stroke-dasharray="1.45 1.45"/></g></svg>
<svg class="ic" style="left:511px;top:101px" width="18" height="15"><path d="M1.4 1.3 L3.4 2.6 L4.4 8.4 L5 11.6 L15.6 11.6" fill="none" stroke="#3d6aa6" stroke-width="1.2"/><path d="M3.6 3.3 L16.9 3.3 L14.6 8.4 L4.4 8.4 Z" fill="#c9d9ec" stroke="#3d6aa6" stroke-width="1.1"/><path d="M6.2 3.8v4.2M8.4 3.8v4.2M10.6 3.8v4.2M12.8 3.8v4.2" stroke="#4d7bb3" stroke-width="0.9"/><path d="M4 5.9 H15.8" stroke="#6a92c2" stroke-width="0.7"/><circle cx="5.7" cy="13.4" r="1.2" fill="#2f7ad6"/><circle cx="13.6" cy="13.4" r="1.2" fill="#2f7ad6"/></svg>
<svg class="ic" style="left:530px;top:101px" width="16" height="16"><circle cx="8" cy="8" r="6.9" fill="url(#ig)" stroke="#b6cce3" stroke-width="0.8"/><rect x="6.9" y="3.6" width="2.2" height="2" fill="#3b6aa6"/><rect x="6.9" y="6.6" width="2.2" height="5.8" fill="#3b6aa6"/></svg>
<svg class="ic" style="left:574px;top:102px" width="17" height="14"><path d="M0.6 2.2 L2.5 1.6 L2.5 0.6 L5 0.6 L5 1.3 L7.5 1.8 L10 1.3 L10 0.6 L12.5 0.6 L12.5 1.6 L14.4 2.2 L14.4 12.6 L10 12.2 L7.5 13 L5 12.2 L0.6 12.6 Z" fill="url(#bkg)" stroke="#8c8c74" stroke-width="0.8"/><path d="M1.5 11.5 Q4.5 10.8 7.5 12.2 Q10.5 10.8 13.5 11.5" fill="none" stroke="#777" stroke-width="0.7"/><circle cx="8.6" cy="5.8" r="3.5" fill="none" stroke="#3a3a3a" stroke-width="1"/><path d="M10.9 8.6 L14.6 13.2" stroke="#262626" stroke-width="1.4"/></svg>
<div class="ct" style="left:667px;top:100px;color:#000000;transform:scaleX(0.966)">2652C819</div>
<div class="ct" style="left:735px;top:100px;color:#000000;transform:scaleX(0.975)">1</div>
<div class="ct" style="left:766px;top:100px;color:#000000;transform:scaleX(0.966)">2652C819</div>
<div class="ct" style="left:850px;top:100px;color:#000000;transform:scaleX(0.913)">CLAMP</div>
<div class="ct" style="left:974px;top:100px;color:#000000;transform:scaleX(0.960)">U901464D</div>
<div class="ct" style="left:1048px;top:100px;color:#000000;transform:scaleX(1.000)">01/04/1995</div>
<div class="hsepr" style="top:119px"></div>
<div class="row" style="top:120px;background:#ffffff"></div>
<div class="vsep" style="left:570px;top:120px;background:#ececec"></div>
<div class="vsep" style="left:628px;top:120px;background:#ececec"></div>
<div class="vsep" style="left:663px;top:120px;background:#ececec"></div>
<div class="vsep" style="left:731px;top:120px;background:#ececec"></div>
<div class="vsep" style="left:762px;top:120px;background:#ececec"></div>
<div class="vsep" style="left:846px;top:120px;background:#ececec"></div>
<div class="vsep" style="left:970px;top:120px;background:#ececec"></div>
<div class="vsep" style="left:1044px;top:120px;background:#ececec"></div>
<div class="vsep" style="left:1111px;top:120px;background:#ececec"></div>
<svg class="ic" style="left:494px;top:121px" width="16" height="17"><g transform="translate(6 6)"><circle cx="0" cy="0" r="2.5" fill="none" stroke="#2d6be0" stroke-width="2.1"/><circle cx="0" cy="0" r="3.7" fill="none" stroke="#2d6be0" stroke-width="1.5" stroke-dasharray="1.45 1.45"/></g><g transform="translate(11 11)"><circle cx="0" cy="0" r="2.5" fill="none" stroke="#74ae2c" stroke-width="2.1"/><circle cx="0" cy="0" r="3.7" fill="none" stroke="#74ae2c" stroke-width="1.5" stroke-dasharray="1.45 1.45"/></g></svg>
<svg class="ic" style="left:511px;top:121px" width="18" height="15"><path d="M1.4 1.3 L3.4 2.6 L4.4 8.4 L5 11.6 L15.6 11.6" fill="none" stroke="#3d6aa6" stroke-width="1.2"/><path d="M3.6 3.3 L16.9 3.3 L14.6 8.4 L4.4 8.4 Z" fill="#c9d9ec" stroke="#3d6aa6" stroke-width="1.1"/><path d="M6.2 3.8v4.2M8.4 3.8v4.2M10.6 3.8v4.2M12.8 3.8v4.2" stroke="#4d7bb3" stroke-width="0.9"/><path d="M4 5.9 H15.8" stroke="#6a92c2" stroke-width="0.7"/><circle cx="5.7" cy="13.4" r="1.2" fill="#2f7ad6"/><circle cx="13.6" cy="13.4" r="1.2" fill="#2f7ad6"/></svg>
<svg class="ic" style="left:530px;top:121px" width="16" height="16"><circle cx="8" cy="8" r="6.9" fill="url(#ig)" stroke="#b6cce3" stroke-width="0.8"/><rect x="6.9" y="3.6" width="2.2" height="2" fill="#3b6aa6"/><rect x="6.9" y="6.6" width="2.2" height="5.8" fill="#3b6aa6"/></svg>
<div class="ct" style="left:632px;top:120px;color:#000000;transform:scaleX(0.975)">1</div>
<div class="ct" style="left:667px;top:120px;color:#000000;transform:scaleX(0.966)">2652C119</div>
<div class="ct" style="left:735px;top:120px;color:#000000;transform:scaleX(0.975)">1</div>
<div class="ct" style="left:766px;top:120px;color:#000000;transform:scaleX(0.966)">2652C119</div>
<div class="ct" style="left:850px;top:120px;color:#000000;transform:scaleX(0.888)">AIR FILTER ASSEMBLY</div>
<div class="ct" style="left:1048px;top:120px;color:#000000;transform:scaleX(0.960)">U901465D</div>
<div class="hsepr" style="top:139px"></div>
<div class="row" style="top:140px;background:#ffffff"></div>
<div class="vsep" style="left:570px;top:140px;background:#ececec"></div>
<div class="vsep" style="left:628px;top:140px;background:#ececec"></div>
<div class="vsep" style="left:663px;top:140px;background:#ececec"></div>
<div class="vsep" style="left:731px;top:140px;background:#ececec"></div>
<div class="vsep" style="left:762px;top:140px;background:#ececec"></div>
<div class="vsep" style="left:846px;top:140px;background:#ececec"></div>
<div class="vsep" style="left:970px;top:140px;background:#ececec"></div>
<div class="vsep" style="left:1044px;top:140px;background:#ececec"></div>
<div class="vsep" style="left:1111px;top:140px;background:#ececec"></div>
<svg class="ic" style="left:494px;top:141px" width="16" height="17"><g transform="translate(6 6)"><circle cx="0" cy="0" r="2.5" fill="none" stroke="#2d6be0" stroke-width="2.1"/><circle cx="0" cy="0" r="3.7" fill="none" stroke="#2d6be0" stroke-width="1.5" stroke-dasharray="1.45 1.45"/></g><g transform="translate(11 11)"><circle cx="0" cy="0" r="2.5" fill="none" stroke="#74ae2c" stroke-width="2.1"/><circle cx="0" cy="0" r="3.7" fill="none" stroke="#74ae2c" stroke-width="1.5" stroke-dasharray="1.45 1.45"/></g></svg>
<svg class="ic" style="left:511px;top:141px" width="18" height="15"><path d="M1.4 1.3 L3.4 2.6 L4.4 8.4 L5 11.6 L15.6 11.6" fill="none" stroke="#3d6aa6" stroke-width="1.2"/><path d="M3.6 3.3 L16.9 3.3 L14.6 8.4 L4.4 8.4 Z" fill="#c9d9ec" stroke="#3d6aa6" stroke-width="1.1"/><path d="M6.2 3.8v4.2M8.4 3.8v4.2M10.6 3.8v4.2M12.8 3.8v4.2" stroke="#4d7bb3" stroke-width="0.9"/><path d="M4 5.9 H15.8" stroke="#6a92c2" stroke-width="0.7"/><circle cx="5.7" cy="13.4" r="1.2" fill="#2f7ad6"/><circle cx="13.6" cy="13.4" r="1.2" fill="#2f7ad6"/></svg>
<svg class="ic" style="left:530px;top:141px" width="16" height="16"><circle cx="8" cy="8" r="6.9" fill="url(#ig)" stroke="#b6cce3" stroke-width="0.8"/><text x="8" y="12" text-anchor="middle" font-family="Liberation Sans" font-weight="bold" font-size="11" fill="#1e5a96">S</text></svg>
<svg class="ic" style="left:548px;top:141px" width="16" height="16"><circle cx="8" cy="8" r="6.9" fill="url(#ig)" stroke="#b6cce3" stroke-width="0.8"/><rect x="6.9" y="3.6" width="2.2" height="2" fill="#3b6aa6"/><rect x="6.9" y="6.6" width="2.2" height="5.8" fill="#3b6aa6"/></svg>
<svg class="ic" style="left:576px;top:144px" width="12" height="11"><path d="M1 1 L11 10 M11 1 L1 10" stroke="#f26522" stroke-width="1.3"/></svg>
<svg class="ic" style="left:590px;top:142px" width="17" height="14"><path d="M0.6 2.2 L2.5 1.6 L2.5 0.6 L5 0.6 L5 1.3 L7.5 1.8 L10 1.3 L10 0.6 L12.5 0.6 L12.5 1.6 L14.4 2.2 L14.4 12.6 L10 12.2 L7.5 13 L5 12.2 L0.6 12.6 Z" fill="url(#bkg)" stroke="#8c8c74" stroke-width="0.8"/><path d="M1.5 11.5 Q4.5 10.8 7.5 12.2 Q10.5 10.8 13.5 11.5" fill="none" stroke="#777" stroke-width="0.7"/><circle cx="8.6" cy="5.8" r="3.5" fill="none" stroke="#3a3a3a" stroke-width="1"/><path d="M10.9 8.6 L14.6 13.2" stroke="#262626" stroke-width="1.4"/></svg>
<div class="ct" style="left:632px;top:140px;color:#000000;transform:scaleX(0.975)">1</div>
<div class="ct" style="left:667px;top:140px;color:#000000;transform:scaleX(0.966)">2652C106</div>
<div class="ct" style="left:735px;top:140px;color:#000000;transform:scaleX(0.975)">1</div>
<div class="ct" style="left:766px;top:140px;color:#000000;transform:scaleX(1.010)">Check History</div>
<div class="ct" style="left:850px;top:140px;color:#000000;transform:scaleX(0.894)">SCREW</div>
<div class="ct" style="left:974px;top:140px;color:#000000;transform:scaleX(0.995)">31/03/1995</div>
<div class="hsepr" style="top:159px"></div>
<div class="row sel" style="top:160px;background:#3399ff"></div>
<div class="vsep" style="left:570px;top:160px;background:#ffffff"></div>
<div class="vsep" style="left:628px;top:160px;background:#ffffff"></div>
<div class="vsep" style="left:663px;top:160px;background:#ffffff"></div>
<div class="vsep" style="left:731px;top:160px;background:#ffffff"></div>
<div class="vsep" style="left:762px;top:160px;background:#ffffff"></div>
<div class="vsep" style="left:846px;top:160px;background:#ffffff"></div>
<div class="vsep" style="left:970px;top:160px;background:#ffffff"></div>
<div class="vsep" style="left:1044px;top:160px;background:#ffffff"></div>
<div class="vsep" style="left:1111px;top:160px;background:#ffffff"></div>
<svg class="ic" style="left:494px;top:161px" width="16" height="17"><g transform="translate(6 6)"><circle cx="0" cy="0" r="2.5" fill="none" stroke="#2d6be0" stroke-width="2.1"/><circle cx="0" cy="0" r="3.7" fill="none" stroke="#2d6be0" stroke-width="1.5" stroke-dasharray="1.45 1.45"/></g><g transform="translate(11 11)"><circle cx="0" cy="0" r="2.5" fill="none" stroke="#74ae2c" stroke-width="2.1"/><circle cx="0" cy="0" r="3.7" fill="none" stroke="#74ae2c" stroke-width="1.5" stroke-dasharray="1.45 1.45"/></g></svg>
<svg class="ic" style="left:511px;top:161px" width="18" height="15"><path d="M1.4 1.3 L3.4 2.6 L4.4 8.4 L5 11.6 L15.6 11.6" fill="none" stroke="#3d6aa6" stroke-width="1.2"/><path d="M3.6 3.3 L16.9 3.3 L14.6 8.4 L4.4 8.4 Z" fill="#c9d9ec" stroke="#3d6aa6" stroke-width="1.1"/><path d="M6.2 3.8v4.2M8.4 3.8v4.2M10.6 3.8v4.2M12.8 3.8v4.2" stroke="#4d7bb3" stroke-width="0.9"/><path d="M4 5.9 H15.8" stroke="#6a92c2" stroke-width="0.7"/><circle cx="5.7" cy="13.4" r="1.2" fill="#2f7ad6"/><circle cx="13.6" cy="13.4" r="1.2" fill="#2f7ad6"/></svg>
<svg class="ic" style="left:530px;top:161px" width="16" height="16"><circle cx="8" cy="8" r="6.9" fill="url(#ig)" stroke="#b6cce3" stroke-width="0.8"/><rect x="6.9" y="3.6" width="2.2" height="2" fill="#3b6aa6"/><rect x="6.9" y="6.6" width="2.2" height="5.8" fill="#3b6aa6"/></svg>
<svg class="ic" style="left:574px;top:162px" width="17" height="14"><path d="M0.6 2.2 L2.5 1.6 L2.5 0.6 L5 0.6 L5 1.3 L7.5 1.8 L10 1.3 L10 0.6 L12.5 0.6 L12.5 1.6 L14.4 2.2 L14.4 12.6 L10 12.2 L7.5 13 L5 12.2 L0.6 12.6 Z" fill="url(#bkg)" stroke="#8c8c74" stroke-width="0.8"/><path d="M1.5 11.5 Q4.5 10.8 7.5 12.2 Q10.5 10.8 13.5 11.5" fill="none" stroke="#777" stroke-width="0.7"/><circle cx="8.6" cy="5.8" r="3.5" fill="none" stroke="#3a3a3a" stroke-width="1"/><path d="M10.9 8.6 L14.6 13.2" stroke="#262626" stroke-width="1.4"/></svg>
<div class="ct" style="left:632px;top:160px;color:#ffffff;transform:scaleX(0.975)">1</div>
<div class="ct" style="left:667px;top:160px;color:#ffffff;transform:scaleX(0.966)">2652C112</div>
<div class="ct" style="left:735px;top:160px;color:#ffffff;transform:scaleX(0.975)">1</div>
<div class="ct" style="left:766px;top:160px;color:#ffffff;transform:scaleX(0.966)">2652C112</div>
<div class="ct" style="left:850px;top:160px;color:#ffffff;transform:scaleX(0.888)">AIR FILTER ASSEMBLY</div>
<div class="ct" style="left:974px;top:160px;color:#ffffff;transform:scaleX(0.960)">U901464D</div>
<div class="ct" style="left:1048px;top:160px;color:#ffffff;transform:scaleX(1.000)">01/04/1995</div>
<div class="hsepr" style="top:179px"></div>
<div class="row" style="top:180px;background:#ffffff"></div>
<div class="vsep" style="left:570px;top:180px;background:#ececec"></div>
<div class="vsep" style="left:628px;top:180px;background:#ececec"></div>
<div class="vsep" style="left:663px;top:180px;background:#ececec"></div>
<div class="vsep" style="left:731px;top:180px;background:#ececec"></div>
<div class="vsep" style="left:762px;top:180px;background:#ececec"></div>
<div class="vsep" style="left:846px;top:180px;background:#ececec"></div>
<div class="vsep" style="left:970px;top:180px;background:#ececec"></div>
<div class="vsep" style="left:1044px;top:180px;background:#ececec"></div>
<div class="vsep" style="left:1111px;top:180px;background:#ececec"></div>
<svg class="ic" style="left:494px;top:181px" width="16" height="17"><g transform="translate(8 8) scale(1.22)"><circle cx="0" cy="0" r="2.5" fill="none" stroke="#74ae2c" stroke-width="2.1"/><circle cx="0" cy="0" r="3.7" fill="none" stroke="#74ae2c" stroke-width="1.5" stroke-dasharray="1.45 1.45"/></g></svg>
<svg class="ic" style="left:511px;top:181px" width="18" height="15"><path d="M1.4 1.3 L3.4 2.6 L4.4 8.4 L5 11.6 L15.6 11.6" fill="none" stroke="#3d6aa6" stroke-width="1.2"/><path d="M3.6 3.3 L16.9 3.3 L14.6 8.4 L4.4 8.4 Z" fill="#c9d9ec" stroke="#3d6aa6" stroke-width="1.1"/><path d="M6.2 3.8v4.2M8.4 3.8v4.2M10.6 3.8v4.2M12.8 3.8v4.2" stroke="#4d7bb3" stroke-width="0.9"/><path d="M4 5.9 H15.8" stroke="#6a92c2" stroke-width="0.7"/><circle cx="5.7" cy="13.4" r="1.2" fill="#2f7ad6"/><circle cx="13.6" cy="13.4" r="1.2" fill="#2f7ad6"/></svg>
<svg class="ic" style="left:530px;top:181px" width="16" height="16"><circle cx="8" cy="8" r="6.9" fill="url(#ig)" stroke="#b6cce3" stroke-width="0.8"/><rect x="6.9" y="3.6" width="2.2" height="2" fill="#3b6aa6"/><rect x="6.9" y="6.6" width="2.2" height="5.8" fill="#3b6aa6"/></svg>
<div class="ct" style="left:632px;top:180px;color:#000000;transform:scaleX(0.975)">10</div>
<div class="ct" style="left:667px;top:180px;color:#000000;transform:scaleX(0.969)">3648T009</div>
<div class="ct" style="left:735px;top:180px;color:#000000;transform:scaleX(0.975)">1</div>
<div class="ct" style="left:766px;top:180px;color:#000000;transform:scaleX(0.969)">3648T009</div>
<div class="ct" style="left:850px;top:180px;color:#000000;transform:scaleX(0.866)">BRACKET</div>
<div class="ct" style="left:1048px;top:180px;color:#000000;transform:scaleX(0.960)">U901465D</div>
<div class="hsepr" style="top:199px"></div>
<div class="row" style="top:200px;background:#ffffff"></div>
<div class="vsep" style="left:570px;top:200px;background:#ececec"></div>
<div class="vsep" style="left:628px;top:200px;background:#ececec"></div>
<div class="vsep" style="left:663px;top:200px;background:#ececec"></div>
<div class="vsep" style="left:731px;top:200px;background:#ececec"></div>
<div class="vsep" style="left:762px;top:200px;background:#ececec"></div>
<div class="vsep" style="left:846px;top:200px;background:#ececec"></div>
<div class="vsep" style="left:970px;top:200px;background:#ececec"></div>
<div class="vsep" style="left:1044px;top:200px;background:#ececec"></div>
<div class="vsep" style="left:1111px;top:200px;background:#ececec"></div>
<svg class="ic" style="left:494px;top:201px" width="16" height="17"><g transform="translate(8 8) scale(1.22)"><circle cx="0" cy="0" r="2.5" fill="none" stroke="#74ae2c" stroke-width="2.1"/><circle cx="0" cy="0" r="3.7" fill="none" stroke="#74ae2c" stroke-width="1.5" stroke-dasharray="1.45 1.45"/></g></svg>
<svg class="ic" style="left:511px;top:201px" width="18" height="15"><path d="M1.4 1.3 L3.4 2.6 L4.4 8.4 L5 11.6 L15.6 11.6" fill="none" stroke="#3d6aa6" stroke-width="1.2"/><path d="M3.6 3.3 L16.9 3.3 L14.6 8.4 L4.4 8.4 Z" fill="#c9d9ec" stroke="#3d6aa6" stroke-width="1.1"/><path d="M6.2 3.8v4.2M8.4 3.8v4.2M10.6 3.8v4.2M12.8 3.8v4.2" stroke="#4d7bb3" stroke-width="0.9"/><path d="M4 5.9 H15.8" stroke="#6a92c2" stroke-width="0.7"/><circle cx="5.7" cy="13.4" r="1.2" fill="#2f7ad6"/><circle cx="13.6" cy="13.4" r="1.2" fill="#2f7ad6"/></svg>
<svg class="ic" style="left:530px;top:201px" width="16" height="16"><circle cx="8" cy="8" r="6.9" fill="url(#ig)" stroke="#b6cce3" stroke-width="0.8"/><rect x="6.9" y="3.6" width="2.2" height="2" fill="#3b6aa6"/><rect x="6.9" y="6.6" width="2.2" height="5.8" fill="#3b6aa6"/></svg>
<svg class="ic" style="left:574px;top:202px" width="17" height="14"><path d="M0.6 2.2 L2.5 1.6 L2.5 0.6 L5 0.6 L5 1.3 L7.5 1.8 L10 1.3 L10 0.6 L12.5 0.6 L12.5 1.6 L14.4 2.2 L14.4 12.6 L10 12.2 L7.5 13 L5 12.2 L0.6 12.6 Z" fill="url(#bkg)" stroke="#8c8c74" stroke-width="0.8"/><path d="M1.5 11.5 Q4.5 10.8 7.5 12.2 Q10.5 10.8 13.5 11.5" fill="none" stroke="#777" stroke-width="0.7"/><circle cx="8.6" cy="5.8" r="3.5" fill="none" stroke="#3a3a3a" stroke-width="1"/><path d="M10.9 8.6 L14.6 13.2" stroke="#262626" stroke-width="1.4"/></svg>
<div class="ct" style="left:632px;top:200px;color:#000000;transform:scaleX(0.975)">10</div>
<div class="ct" style="left:667px;top:200px;color:#000000;transform:scaleX(0.969)">3648T003</div>
<div class="ct" style="left:735px;top:200px;color:#000000;transform:scaleX(0.975)">1</div>
<div class="ct" style="left:766px;top:200px;color:#000000;transform:scaleX(0.969)">3648T003</div>
<div class="ct" style="left:850px;top:200px;color:#000000;transform:scaleX(0.866)">BRACKET</div>
<div class="ct" style="left:974px;top:200px;color:#000000;transform:scaleX(0.960)">U901464D</div>
<div class="ct" style="left:1048px;top:200px;color:#000000;transform:scaleX(1.000)">01/04/1995</div>
<div class="hsepr" style="top:219px"></div>
<div class="row" style="top:220px;background:#ffffff"></div>
<div class="vsep" style="left:570px;top:220px;background:#ececec"></div>
<div class="vsep" style="left:628px;top:220px;background:#ececec"></div>
<div class="vsep" style="left:663px;top:220px;background:#ececec"></div>
<div class="vsep" style="left:731px;top:220px;background:#ececec"></div>
<div class="vsep" style="left:762px;top:220px;background:#ececec"></div>
<div class="vsep" style="left:846px;top:220px;background:#ececec"></div>
<div class="vsep" style="left:970px;top:220px;background:#ececec"></div>
<div class="vsep" style="left:1044px;top:220px;background:#ececec"></div>
<div class="vsep" style="left:1111px;top:220px;background:#ececec"></div>
<svg class="ic" style="left:494px;top:221px" width="16" height="17"><g transform="translate(8 8) scale(1.22)"><circle cx="0" cy="0" r="2.5" fill="none" stroke="#74ae2c" stroke-width="2.1"/><circle cx="0" cy="0" r="3.7" fill="none" stroke="#74ae2c" stroke-width="1.5" stroke-dasharray="1.45 1.45"/></g></svg>
<svg class="ic" style="left:511px;top:221px" width="18" height="15"><path d="M1.4 1.3 L3.4 2.6 L4.4 8.4 L5 11.6 L15.6 11.6" fill="none" stroke="#3d6aa6" stroke-width="1.2"/><path d="M3.6 3.3 L16.9 3.3 L14.6 8.4 L4.4 8.4 Z" fill="#c9d9ec" stroke="#3d6aa6" stroke-width="1.1"/><path d="M6.2 3.8v4.2M8.4 3.8v4.2M10.6 3.8v4.2M12.8 3.8v4.2" stroke="#4d7bb3" stroke-width="0.9"/><path d="M4 5.9 H15.8" stroke="#6a92c2" stroke-width="0.7"/><circle cx="5.7" cy="13.4" r="1.2" fill="#2f7ad6"/><circle cx="13.6" cy="13.4" r="1.2" fill="#2f7ad6"/></svg>
<svg class="ic" style="left:530px;top:221px" width="16" height="16"><circle cx="8" cy="8" r="6.9" fill="url(#ig)" stroke="#b6cce3" stroke-width="0.8"/><rect x="6.9" y="3.6" width="2.2" height="2" fill="#3b6aa6"/><rect x="6.9" y="6.6" width="2.2" height="5.8" fill="#3b6aa6"/></svg>
<svg class="ic" style="left:574px;top:222px" width="17" height="14"><path d="M0.6 2.2 L2.5 1.6 L2.5 0.6 L5 0.6 L5 1.3 L7.5 1.8 L10 1.3 L10 0.6 L12.5 0.6 L12.5 1.6 L14.4 2.2 L14.4 12.6 L10 12.2 L7.5 13 L5 12.2 L0.6 12.6 Z" fill="url(#bkg)" stroke="#8c8c74" stroke-width="0.8"/><path d="M1.5 11.5 Q4.5 10.8 7.5 12.2 Q10.5 10.8 13.5 11.5" fill="none" stroke="#777" stroke-width="0.7"/><circle cx="8.6" cy="5.8" r="3.5" fill="none" stroke="#3a3a3a" stroke-width="1"/><path d="M10.9 8.6 L14.6 13.2" stroke="#262626" stroke-width="1.4"/></svg>
<svg class="ic" style="left:593px;top:224px" width="12" height="11"><path d="M1 1 L11 10 M11 1 L1 10" stroke="#f26522" stroke-width="1.3"/></svg>
<div class="ct" style="left:632px;top:220px;color:#000000;transform:scaleX(0.975)">10</div>
<div class="ct" style="left:667px;top:220px;color:#000000;transform:scaleX(0.993)">3831V006</div>
<div class="ct" style="left:735px;top:220px;color:#000000;transform:scaleX(0.975)">1</div>
<div class="ct" style="left:766px;top:220px;color:#000000;transform:scaleX(0.993)">3831V006</div>
<div class="ct" style="left:850px;top:220px;color:#000000;transform:scaleX(0.866)">BRACKET</div>
<div class="ct" style="left:974px;top:220px;color:#000000;transform:scaleX(0.995)">31/03/1995</div>
<div class="hsepr" style="top:239px"></div>
<div class="row" style="top:240px;background:#ffffff"></div>
<div class="vsep" style="left:570px;top:240px;background:#ececec"></div>
<div class="vsep" style="left:628px;top:240px;background:#ececec"></div>
<div class="vsep" style="left:663px;top:240px;background:#ececec"></div>
<div class="vsep" style="left:731px;top:240px;background:#ececec"></div>
<div class="vsep" style="left:762px;top:240px;background:#ececec"></div>
<div class="vsep" style="left:846px;top:240px;background:#ececec"></div>
<div class="vsep" style="left:970px;top:240px;background:#ececec"></div>
<div class="vsep" style="left:1044px;top:240px;background:#ececec"></div>
<div class="vsep" style="left:1111px;top:240px;background:#ececec"></div>
<svg class="ic" style="left:494px;top:241px" width="16" height="17"><g transform="translate(8 8) scale(1.22)"><circle cx="0" cy="0" r="2.5" fill="none" stroke="#74ae2c" stroke-width="2.1"/><circle cx="0" cy="0" r="3.7" fill="none" stroke="#74ae2c" stroke-width="1.5" stroke-dasharray="1.45 1.45"/></g></svg>
<svg class="ic" style="left:511px;top:241px" width="18" height="15"><path d="M1.4 1.3 L3.4 2.6 L4.4 8.4 L5 11.6 L15.6 11.6" fill="none" stroke="#3d6aa6" stroke-width="1.2"/><path d="M3.6 3.3 L16.9 3.3 L14.6 8.4 L4.4 8.4 Z" fill="#c9d9ec" stroke="#3d6aa6" stroke-width="1.1"/><path d="M6.2 3.8v4.2M8.4 3.8v4.2M10.6 3.8v4.2M12.8 3.8v4.2" stroke="#4d7bb3" stroke-width="0.9"/><path d="M4 5.9 H15.8" stroke="#6a92c2" stroke-width="0.7"/><circle cx="5.7" cy="13.4" r="1.2" fill="#2f7ad6"/><circle cx="13.6" cy="13.4" r="1.2" fill="#2f7ad6"/></svg>
<svg class="ic" style="left:530px;top:241px" width="16" height="16"><circle cx="8" cy="8" r="6.9" fill="url(#ig)" stroke="#b6cce3" stroke-width="0.8"/><rect x="6.9" y="3.6" width="2.2" height="2" fill="#3b6aa6"/><rect x="6.9" y="6.6" width="2.2" height="5.8" fill="#3b6aa6"/></svg>
<div class="ct" style="left:632px;top:240px;color:#000000;transform:scaleX(0.975)">11</div>
<div class="ct" style="left:667px;top:240px;color:#000000;transform:scaleX(0.993)">2314H010</div>
<div class="ct" style="left:735px;top:240px;color:#000000;transform:scaleX(0.975)">3</div>
<div class="ct" style="left:766px;top:240px;color:#000000;transform:scaleX(0.993)">2314H010</div>
<div class="ct" style="left:850px;top:240px;color:#000000;transform:scaleX(0.894)">SCREW</div>
<div class="hsepr" style="top:259px"></div>
<div class="row" style="top:260px;background:#ffffff"></div>
<div class="vsep" style="left:570px;top:260px;background:#ececec"></div>
<div class="vsep" style="left:628px;top:260px;background:#ececec"></div>
<div class="vsep" style="left:663px;top:260px;background:#ececec"></div>
<div class="vsep" style="left:731px;top:260px;background:#ececec"></div>
<div class="vsep" style="left:762px;top:260px;background:#ececec"></div>
<div class="vsep" style="left:846px;top:260px;background:#ececec"></div>
<div class="vsep" style="left:970px;top:260px;background:#ececec"></div>
<div class="vsep" style="left:1044px;top:260px;background:#ececec"></div>
<div class="vsep" style="left:1111px;top:260px;background:#ececec"></div>
<svg class="ic" style="left:494px;top:261px" width="16" height="17"><g transform="translate(8 8) scale(1.22)"><circle cx="0" cy="0" r="2.5" fill="none" stroke="#74ae2c" stroke-width="2.1"/><circle cx="0" cy="0" r="3.7" fill="none" stroke="#74ae2c" stroke-width="1.5" stroke-dasharray="1.45 1.45"/></g></svg>
<svg class="ic" style="left:511px;top:261px" width="18" height="15"><path d="M1.4 1.3 L3.4 2.6 L4.4 8.4 L5 11.6 L15.6 11.6" fill="none" stroke="#3d6aa6" stroke-width="1.2"/><path d="M3.6 3.3 L16.9 3.3 L14.6 8.4 L4.4 8.4 Z" fill="#c9d9ec" stroke="#3d6aa6" stroke-width="1.1"/><path d="M6.2 3.8v4.2M8.4 3.8v4.2M10.6 3.8v4.2M12.8 3.8v4.2" stroke="#4d7bb3" stroke-width="0.9"/><path d="M4 5.9 H15.8" stroke="#6a92c2" stroke-width="0.7"/><circle cx="5.7" cy="13.4" r="1.2" fill="#2f7ad6"/><circle cx="13.6" cy="13.4" r="1.2" fill="#2f7ad6"/></svg>
<svg class="ic" style="left:530px;top:261px" width="16" height="16"><circle cx="8" cy="8" r="6.9" fill="url(#ig)" stroke="#b6cce3" stroke-width="0.8"/><rect x="6.9" y="3.6" width="2.2" height="2" fill="#3b6aa6"/><rect x="6.9" y="6.6" width="2.2" height="5.8" fill="#3b6aa6"/></svg>
<div class="ct" style="left:632px;top:260px;color:#000000;transform:scaleX(0.975)">12</div>
<div class="ct" style="left:667px;top:260px;color:#000000;transform:scaleX(0.968)">2314J009</div>
<div class="ct" style="left:735px;top:260px;color:#000000;transform:scaleX(0.975)">2</div>
<div class="ct" style="left:766px;top:260px;color:#000000;transform:scaleX(0.968)">2314J009</div>
<div class="ct" style="left:850px;top:260px;color:#000000;transform:scaleX(0.894)">SCREW</div>
<div class="hsepr" style="top:279px"></div>
<div class="row" style="top:280px;background:#ffffff"></div>
<div class="vsep" style="left:570px;top:280px;background:#ececec"></div>
<div class="vsep" style="left:628px;top:280px;background:#ececec"></div>
<div class="vsep" style="left:663px;top:280px;background:#ececec"></div>
<div class="vsep" style="left:731px;top:280px;background:#ececec"></div>
<div class="vsep" style="left:762px;top:280px;background:#ececec"></div>
<div class="vsep" style="left:846px;top:280px;background:#ececec"></div>
<div class="vsep" style="left:970px;top:280px;background:#ececec"></div>
<div class="vsep" style="left:1044px;top:280px;background:#ececec"></div>
<div class="vsep" style="left:1111px;top:280px;background:#ececec"></div>
<svg class="ic" style="left:494px;top:281px" width="16" height="17"><g transform="translate(8 8) scale(1.22)"><circle cx="0" cy="0" r="2.5" fill="none" stroke="#74ae2c" stroke-width="2.1"/><circle cx="0" cy="0" r="3.7" fill="none" stroke="#74ae2c" stroke-width="1.5" stroke-dasharray="1.45 1.45"/></g></svg>
<svg class="ic" style="left:511px;top:281px" width="18" height="15"><path d="M1.4 1.3 L3.4 2.6 L4.4 8.4 L5 11.6 L15.6 11.6" fill="none" stroke="#3d6aa6" stroke-width="1.2"/><path d="M3.6 3.3 L16.9 3.3 L14.6 8.4 L4.4 8.4 Z" fill="#c9d9ec" stroke="#3d6aa6" stroke-width="1.1"/><path d="M6.2 3.8v4.2M8.4 3.8v4.2M10.6 3.8v4.2M12.8 3.8v4.2" stroke="#4d7bb3" stroke-width="0.9"/><path d="M4 5.9 H15.8" stroke="#6a92c2" stroke-width="0.7"/><circle cx="5.7" cy="13.4" r="1.2" fill="#2f7ad6"/><circle cx="13.6" cy="13.4" r="1.2" fill="#2f7ad6"/></svg>
<svg class="ic" style="left:530px;top:281px" width="16" height="16"><circle cx="8" cy="8" r="6.9" fill="url(#ig)" stroke="#b6cce3" stroke-width="0.8"/><rect x="6.9" y="3.6" width="2.2" height="2" fill="#3b6aa6"/><rect x="6.9" y="6.6" width="2.2" height="5.8" fill="#3b6aa6"/></svg>
<div class="ct" style="left:632px;top:280px;color:#000000;transform:scaleX(0.975)">13</div>
<div class="ct" style="left:667px;top:280px;color:#000000;transform:scaleX(0.998)">33246117</div>
<div class="ct" style="left:735px;top:280px;color:#000000;transform:scaleX(0.975)">4</div>
<div class="ct" style="left:766px;top:280px;color:#000000;transform:scaleX(0.998)">33246117</div>
<div class="ct" style="left:850px;top:280px;color:#000000;transform:scaleX(0.878)">SPACER</div>
<div class="hsepr" style="top:299px"></div>
<div class="row" style="top:300px;background:#fefee2"></div>
<div class="vsep" style="left:570px;top:300px;background:#ececec"></div>
<div class="vsep" style="left:628px;top:300px;background:#ececec"></div>
<div class="vsep" style="left:663px;top:300px;background:#ececec"></div>
<div class="vsep" style="left:731px;top:300px;background:#ececec"></div>
<div class="vsep" style="left:762px;top:300px;background:#ececec"></div>
<div class="vsep" style="left:846px;top:300px;background:#ececec"></div>
<div class="vsep" style="left:970px;top:300px;background:#ececec"></div>
<div class="vsep" style="left:1044px;top:300px;background:#ececec"></div>
<div class="vsep" style="left:1111px;top:300px;background:#ececec"></div>
<svg class="ic" style="left:494px;top:301px" width="16" height="17"><g transform="translate(8 8) scale(1.22)"><circle cx="0" cy="0" r="2.5" fill="none" stroke="#74ae2c" stroke-width="2.1"/><circle cx="0" cy="0" r="3.7" fill="none" stroke="#74ae2c" stroke-width="1.5" stroke-dasharray="1.45 1.45"/></g></svg>
<svg class="ic" style="left:511px;top:301px" width="18" height="15"><path d="M1.4 1.3 L3.4 2.6 L4.4 8.4 L5 11.6 L15.6 11.6" fill="none" stroke="#3d6aa6" stroke-width="1.2"/><path d="M3.6 3.3 L16.9 3.3 L14.6 8.4 L4.4 8.4 Z" fill="#c9d9ec" stroke="#3d6aa6" stroke-width="1.1"/><path d="M6.2 3.8v4.2M8.4 3.8v4.2M10.6 3.8v4.2M12.8 3.8v4.2" stroke="#4d7bb3" stroke-width="0.9"/><path d="M4 5.9 H15.8" stroke="#6a92c2" stroke-width="0.7"/><circle cx="5.7" cy="13.4" r="1.2" fill="#2f7ad6"/><circle cx="13.6" cy="13.4" r="1.2" fill="#2f7ad6"/></svg>
<svg class="ic" style="left:530px;top:301px" width="16" height="16"><circle cx="8" cy="8" r="6.9" fill="url(#ig)" stroke="#b6cce3" stroke-width="0.8"/><rect x="6.9" y="3.6" width="2.2" height="2" fill="#3b6aa6"/><rect x="6.9" y="6.6" width="2.2" height="5.8" fill="#3b6aa6"/></svg>
<div class="ct" style="left:632px;top:300px;color:#000000;transform:scaleX(0.975)">14</div>
<div class="ct" style="left:667px;top:300px;color:#000000;transform:scaleX(0.975)">3482E016</div>
<div class="ct" style="left:735px;top:300px;color:#000000;transform:scaleX(0.975)">1</div>
<div class="ct" style="left:766px;top:300px;color:#000000;transform:scaleX(0.975)">3482E016</div>
<div class="ct" style="left:850px;top:300px;color:#000000;transform:scaleX(0.914)">HOSE</div>
<div class="hsepr" style="top:319px"></div>
<div class="row" style="top:320px;background:#ffffff"></div>
<div class="vsep" style="left:570px;top:320px;background:#ececec"></div>
<div class="vsep" style="left:628px;top:320px;background:#ececec"></div>
<div class="vsep" style="left:663px;top:320px;background:#ececec"></div>
<div class="vsep" style="left:731px;top:320px;background:#ececec"></div>
<div class="vsep" style="left:762px;top:320px;background:#ececec"></div>
<div class="vsep" style="left:846px;top:320px;background:#ececec"></div>
<div class="vsep" style="left:970px;top:320px;background:#ececec"></div>
<div class="vsep" style="left:1044px;top:320px;background:#ececec"></div>
<div class="vsep" style="left:1111px;top:320px;background:#ececec"></div>
<svg class="ic" style="left:494px;top:321px" width="16" height="17"><g transform="translate(8 8) scale(1.22)"><circle cx="0" cy="0" r="2.5" fill="none" stroke="#74ae2c" stroke-width="2.1"/><circle cx="0" cy="0" r="3.7" fill="none" stroke="#74ae2c" stroke-width="1.5" stroke-dasharray="1.45 1.45"/></g></svg>
<svg class="ic" style="left:511px;top:321px" width="18" height="15"><path d="M1.4 1.3 L3.4 2.6 L4.4 8.4 L5 11.6 L15.6 11.6" fill="none" stroke="#3d6aa6" stroke-width="1.2"/><path d="M3.6 3.3 L16.9 3.3 L14.6 8.4 L4.4 8.4 Z" fill="#c9d9ec" stroke="#3d6aa6" stroke-width="1.1"/><path d="M6.2 3.8v4.2M8.4 3.8v4.2M10.6 3.8v4.2M12.8 3.8v4.2" stroke="#4d7bb3" stroke-width="0.9"/><path d="M4 5.9 H15.8" stroke="#6a92c2" stroke-width="0.7"/><circle cx="5.7" cy="13.4" r="1.2" fill="#2f7ad6"/><circle cx="13.6" cy="13.4" r="1.2" fill="#2f7ad6"/></svg>
<svg class="ic" style="left:530px;top:321px" width="16" height="16"><circle cx="8" cy="8" r="6.9" fill="url(#ig)" stroke="#b6cce3" stroke-width="0.8"/><rect x="6.9" y="3.6" width="2.2" height="2" fill="#3b6aa6"/><rect x="6.9" y="6.6" width="2.2" height="5.8" fill="#3b6aa6"/></svg>
<div class="ct" style="left:632px;top:320px;color:#000000;transform:scaleX(0.975)">15</div>
<div class="ct" style="left:667px;top:320px;color:#000000;transform:scaleX(0.980)">2481907</div>
<div class="ct" style="left:735px;top:320px;color:#000000;transform:scaleX(0.975)">2</div>
<div class="ct" style="left:766px;top:320px;color:#000000;transform:scaleX(0.980)">2481907</div>
<div class="ct" style="left:850px;top:320px;color:#000000;transform:scaleX(0.858)">CLIP</div>
<div class="hsepr" style="top:339px"></div><svg style="position:absolute;left:1136px;top:482px" width="44" height="52" viewBox="1136 482 44 52">
<g fill="none" stroke="#0b4f9e" stroke-width="2.6">
<circle cx="1148.3" cy="494" r="6.6"/><circle cx="1164.8" cy="494" r="6.6"/>
<circle cx="1148.3" cy="510.7" r="6.6"/><circle cx="1164.8" cy="510.7" r="6.6"/>
<path d="M1144 498.5 L1152.5 489.5 M1160.5 489.5 L1169 498.5 M1144 506 L1152.5 515 M1160.5 515 L1169 506" stroke-width="2.2"/>
</g>
<g fill="#0b4f9e">
<path d="M1156.5 484.5 L1158.5 488 L1156.5 491.5 L1154.5 488 Z"/>
<path d="M1156.5 513 L1158.5 516.5 L1156.5 520 L1154.5 516.5 Z"/>
<path d="M1140 502.3 L1143 500.3 L1143 504.3 Z"/>
<path d="M1173 502.3 L1170 500.3 L1170 504.3 Z"/>
</g>
<text x="1139.5" y="531.2" font-family="Liberation Sans" font-weight="bold" font-size="10.3" fill="#0b4f9e" textLength="35.5" lengthAdjust="spacingAndGlyphs">Perkins</text>
</svg>
</body></html>
